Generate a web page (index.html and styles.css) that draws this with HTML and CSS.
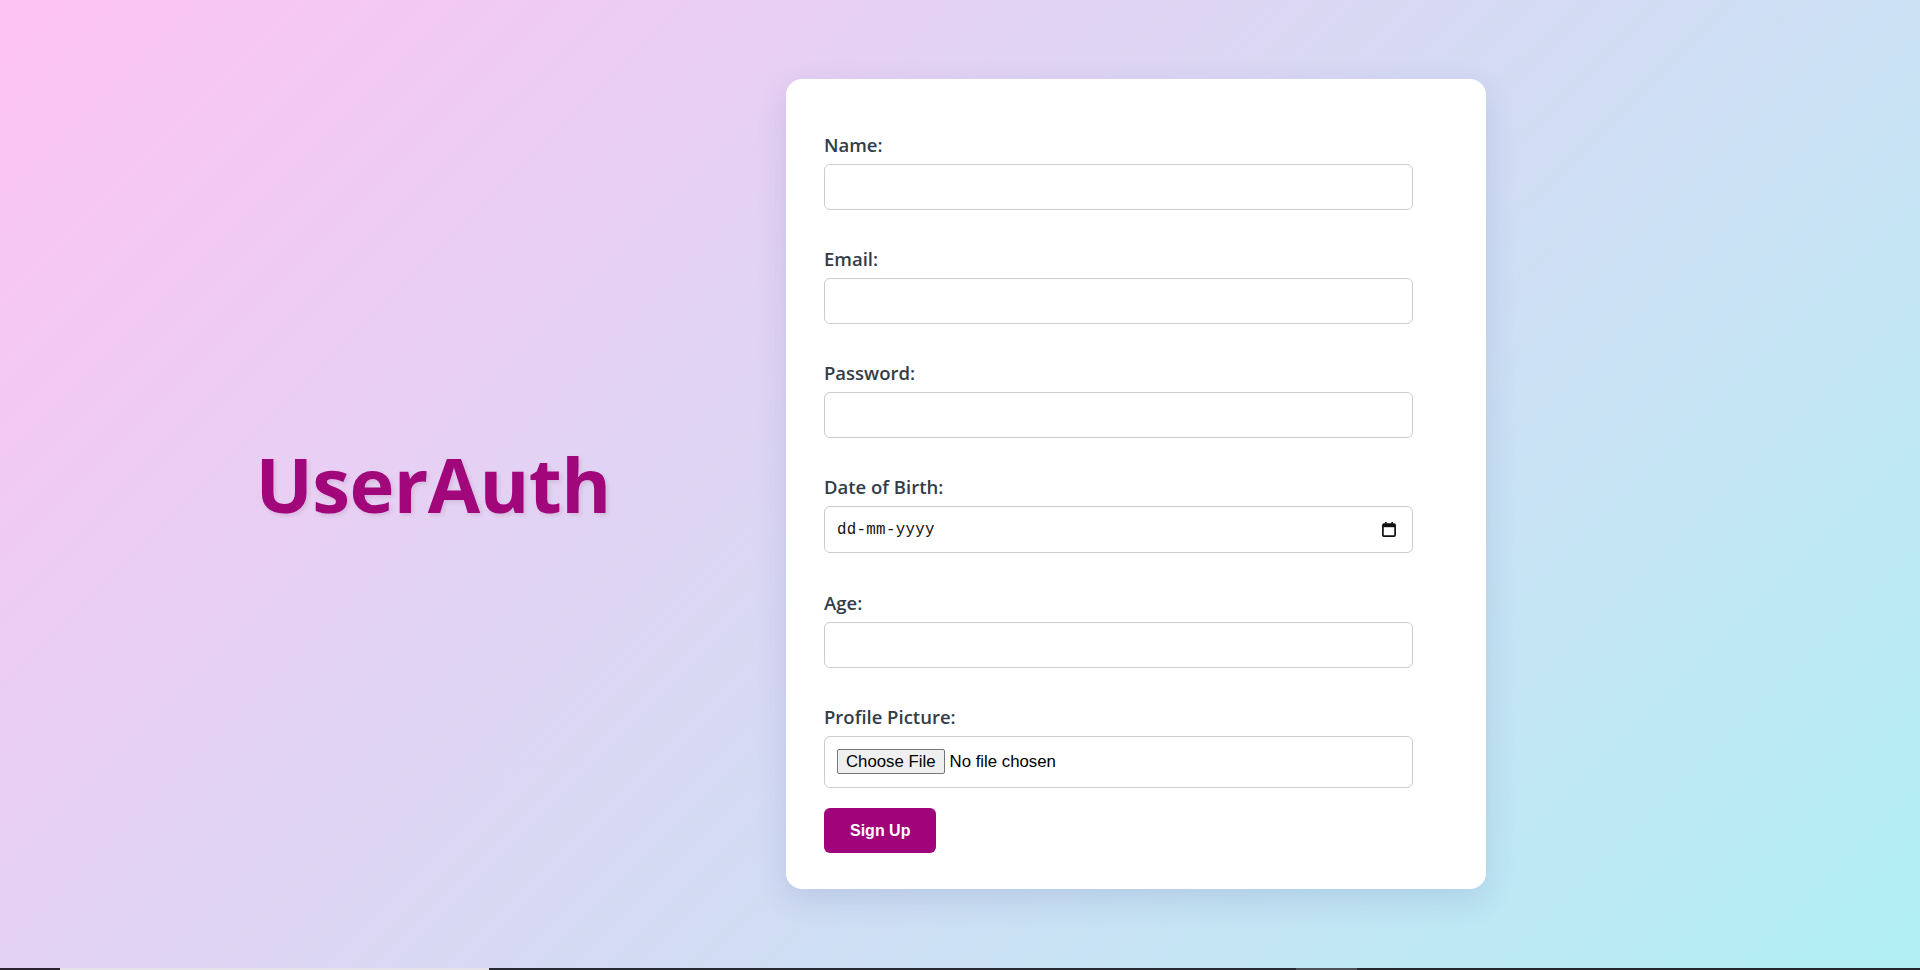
FILE: index.html
```html
<!DOCTYPE html>
<html lang="en">
<head>
<meta charset="utf-8">
<title>UserAuth - Sign Up</title>
<link rel="stylesheet" href="styles.css">
</head>
<body>
  <main class="page">
    <div class="brand">
      <h1 class="brand-title">UserAuth</h1>
    </div>
    <form class="card" onsubmit="return false;">
      <div class="field">
        <label class="field-label" for="name">Name:</label>
        <input class="field-input" id="name" type="text">
      </div>
      <div class="field">
        <label class="field-label" for="email">Email:</label>
        <input class="field-input" id="email" type="email">
      </div>
      <div class="field">
        <label class="field-label" for="password">Password:</label>
        <input class="field-input" id="password" type="password">
      </div>
      <div class="field field-date">
        <label class="field-label" for="dob">Date of Birth:</label>
        <div class="date-wrap">
          <input class="field-input date-input" id="dob" type="text" placeholder="dd-mm-yyyy">
          <svg class="date-icon" width="14" height="15" viewBox="0 0 14 15" aria-hidden="true">
            <rect x="3" y="0" width="1.6" height="3" fill="#111"/>
            <rect x="9.4" y="0" width="1.6" height="3" fill="#111"/>
            <rect x="0.9" y="2.2" width="12.2" height="11.9" rx="1" fill="none" stroke="#111" stroke-width="1.7"/>
            <rect x="0.9" y="2.2" width="12.2" height="3" fill="#111"/>
          </svg>
        </div>
      </div>
      <div class="field">
        <label class="field-label" for="age">Age:</label>
        <input class="field-input" id="age" type="number">
      </div>
      <div class="field field-file">
        <label class="field-label" for="pic">Profile Picture:</label>
        <input class="field-input file-input" id="pic" type="file">
      </div>
      <button class="submit-btn" type="submit">Sign Up</button>
    </form>
  </main>
  <div class="taskbar">
    <span class="tb tb-a"></span>
    <span class="tb tb-b"></span>
    <span class="tb tb-c"></span>
    <span class="tb tb-d"></span>
    <span class="tb tb-e"></span>
  </div>
</body>
</html>
```

FILE: styles.css
```css
* {
  box-sizing: border-box;
}

html, body {
  margin: 0;
  padding: 0;
}

body {
  height: 970px;
  display: flex;
  flex-direction: column;
  font-family: "Open Sans", "Noto Sans", sans-serif;
  background: linear-gradient(135deg, #fec3f3 0%, #b0eff4 100%);
  overflow: hidden;
}

.page {
  flex: 1;
  display: flex;
  align-items: center;
  padding-left: 80px;
}

.brand {
  width: 706px;
  text-align: center;
}

.brand-title {
  margin: 0;
  font-family: "Open Sans", "Noto Sans", sans-serif;
  font-weight: 700;
  font-size: 76px;
  letter-spacing: -0.6px;
  line-height: 1.2;
  color: #a1067b;
  text-shadow: 2px 2px 4px rgba(80, 0, 60, 0.12);
}

.card {
  width: 700px;
  background: #ffffff;
  border-radius: 16px;
  padding: 52px 38px 36px 38px;
  box-shadow: 0 10px 30px rgba(70, 80, 150, 0.15);
}

.field {
  margin-bottom: 35px;
}

.field-label {
  display: block;
  font-size: 18.5px;
  font-weight: 600;
  line-height: 27px;
  color: #333d47;
  margin-bottom: 6px;
}

.field-input {
  display: block;
  width: 589px;
  height: 46px;
  border: 1px solid #cccccc;
  border-radius: 6px;
  padding: 0 12px;
  font-size: 16px;
  font-family: "Liberation Sans", Arial, sans-serif;
  background: #fff;
  color: #111;
  outline: none;
}

.field-date {
  margin-bottom: 36px;
}

.date-wrap {
  position: relative;
  width: 589px;
}

.date-input {
  height: 47px;
  font-family: "Liberation Mono", "DejaVu Sans Mono", monospace;
  font-size: 15.8px;
  letter-spacing: 0.3px;
}

.date-input::placeholder {
  color: #111;
  opacity: 1;
}

.date-icon {
  position: absolute;
  right: 17px;
  top: 16px;
}

.field-file {
  margin-bottom: 20px;
}

.file-input {
  height: 52px;
  padding: 12px 12px;
  font-family: "Liberation Sans", Arial, sans-serif;
  font-size: 16.8px;
  color: #000;
}

.file-input::file-selector-button {
  font-family: "Liberation Sans", Arial, sans-serif;
  font-size: 16.8px;
  height: 25px;
  padding: 0 8px;
  margin-right: 5px;
  background: #efefef;
  border: 1px solid #767676;
  border-radius: 2px;
  color: #000;
}

.submit-btn {
  display: block;
  height: 45px;
  padding: 0 26px;
  border: none;
  border-radius: 6px;
  background: #a1037a;
  color: #ffffff;
  font-family: "Liberation Sans", Arial, sans-serif;
  font-weight: 700;
  font-size: 16px;
  cursor: pointer;
}

.taskbar {
  height: 2px;
  display: flex;
}

.tb {
  display: block;
  height: 2px;
}

.tb-a { width: 60px; background: #2a2330; }
.tb-b { width: 429px; background: #e6e3e8; }
.tb-c { width: 807px; background: #272a32; }
.tb-d { width: 61px; background: #4b5157; }
.tb-e { flex: 1; background: #23282e; }
```
